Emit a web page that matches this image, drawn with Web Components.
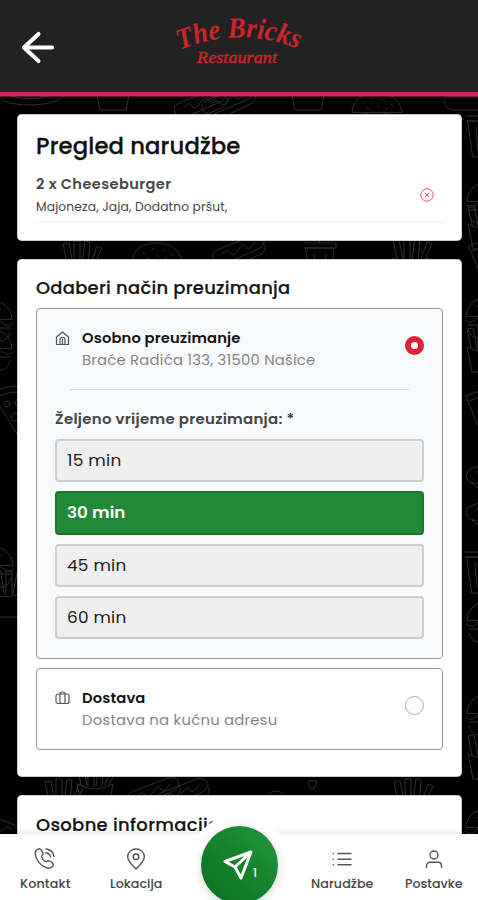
<!DOCTYPE html>
<html lang="hr">
<head>
<meta charset="utf-8">
<meta name="viewport" content="width=device-width, initial-scale=1">
<title>The Bricks Restaurant</title>
<style>
html,body{margin:0;height:100%;overflow:hidden;background:#000}
body{font-family:Poppins,Inter,"Noto Sans",sans-serif;font-feature-settings:"cv11" 1;color:#111}
</style>
</head>
<body>
<order-page></order-page>
<script>
const define = (name, html, after) => {
  const t = document.createElement('template');
  t.innerHTML = html;
  customElements.define(name, class extends HTMLElement {
    constructor() { super(); this.attachShadow({mode: 'open'}).append(t.content.cloneNode(true)); }
    connectedCallback() { if (after) after(this, this.shadowRoot); }
  });
};

/* Single line of text, tracked and slightly widened so that it spans the width in its "w" attribute. */
define('fit-text', `<style>:host{display:block;white-space:nowrap}span{display:inline-block;transform-origin:0 50%}</style><span><slot></slot></span>`, (el, root) => {
  const s = root.querySelector('span'), w = +el.getAttribute('w');
  el.style.width = w + 'px';
  s.style.letterSpacing = '0px';
  const natural = s.getBoundingClientRect().width;
  if (!natural) return;
  s.style.letterSpacing = (w - natural) * .55 / el.textContent.length + 'px';
  s.style.transform = 'scaleX(' + (w + .5) / s.getBoundingClientRect().width + ')';
});

define('food-pattern', `<style>:host{position:absolute;inset:0;z-index:0}svg{display:block}</style>
<svg width="478" height="900" fill="none" stroke="#303030" stroke-width="1" stroke-linecap="round">
<defs>
 <g id="burger"><path d="M2 20C3 6 14 1 27 1S50 7 52 20ZM1 24q5 5 10 0t10 0 10 0 10 0 11 0M4 29h46M4 33q2 9 10 9h26q9 0 10-9"/><path d="M13 10l2 2M22 6l2 2M33 7l2 2M41 12l2 2M27 13l2 2M17 16l2 1M35 16l2 1"/></g>
 <g id="fries"><path d="M3 22l5 25h26l5-25q-18 10-36 0M7 23L3 4l6-1 4 21M14 24V1h6v24M22 24l3-23 5 1-2 22M31 23l6-17 5 2-7 15"/></g>
 <g id="dog"><path d="M3 26Q0 18 9 15L43 2q9-2 11 5 0 6-8 9L14 30Q6 32 3 26M8 29q3 8 12 5l31-14q6-4 4-9M12 20q5-6 8-1t8-3 8-3 9-5"/></g>
 <g id="pizza"><path d="M3 6Q24-5 46 8L21 49ZM6 11Q24 2 43 13"/><circle cx="19" cy="18" r="4"/><circle cx="31" cy="19" r="3"/><circle cx="23" cy="32" r="4"/></g>
 <g id="cup"><path d="M4 8h28l-4 36H9ZM2 3h32v5H2M12 14l2 24M24 14l-2 24M17 3l4-12 8-3"/></g>
</defs>
<ellipse cx="30" cy="94" rx="34" ry="11"/><path d="M12 96q18 6 36 0"/>
<use href="#burger" x="350" y="92"/>
<use href="#fries" x="92" y="63"/><use href="#dog" x="172" y="87"/><use href="#dog" x="200" y="84"/><use href="#fries" x="287" y="63"/><use href="#burger" x="440" y="68"/>
<use href="#fries" x="60" y="240"/><use href="#burger" x="130" y="242"/><use href="#dog" x="210" y="234"/><use href="#cup" x="302" y="240"/><use href="#fries" x="390" y="236"/>
<use href="#cup" x="464" y="113"/><use href="#burger" x="465" y="181"/><use href="#fries" x="465" y="202"/><use href="#pizza" x="466" y="240"/><use href="#burger" x="464" y="296"/><use href="#fries" x="464" y="325"/><use href="#pizza" x="463" y="390"/><use href="#dog" x="464" y="453"/><use href="#dog" x="464" y="490"/><use href="#cup" x="463" y="549"/><use href="#burger" x="465" y="600"/><use href="#burger" x="465" y="693"/><use href="#fries" x="465" y="732"/><use href="#burger" x="464" y="807"/>
<g transform="translate(14 0) scale(-1 1)"><use href="#burger" x="0" y="299"/><use href="#burger" x="0" y="328"/><use href="#pizza" x="-24" y="385"/><use href="#burger" x="-1" y="545"/><use href="#fries" x="-12" y="570"/><use href="#dog" x="-10" y="810"/></g>
<use href="#fries" x="42" y="778"/><use href="#fries" x="74" y="762"/><use href="#dog" x="125" y="776"/><use href="#dog" x="154" y="777"/><path d="M308 781h9l-3 8h-3z"/><use href="#fries" x="391" y="778"/><circle cx="276" cy="801" r="10"/>
</svg>`);

define('bricks-logo', `<style>:host{display:block;width:140px;height:70px}text{font-family:"Monotype Corsiva","Liberation Serif",serif;font-style:italic;fill:#cb2529}</style>
<svg width="140" height="70" viewBox="170 5 140 70">
<path id="arc" d="M180 50Q239 25.500 297 48.500" fill="none"/>
<text font-size="29" font-weight="700" textLength="121" lengthAdjust="spacingAndGlyphs"><textPath href="#arc" textLength="121" lengthAdjust="spacingAndGlyphs">The Bricks</textPath></text>
<text x="197" y="62.500" font-size="17.500" textLength="80" lengthAdjust="spacingAndGlyphs" stroke="#cb2529" stroke-width=".5">Restaurant</text>
</svg>`);

define('app-header', `<style>:host{display:grid;grid-template-columns:170px 140px 1fr;height:92px;padding-top:5px;box-sizing:border-box;background:#222;box-shadow:0 4.5px 0 #cc2760;position:relative;z-index:1;margin-bottom:22px}
.back{padding:25px 0 0 20px}</style>
<div class="back"><svg width="36" height="36" fill="none" stroke="#fff" stroke-width="4.100" stroke-linecap="round" stroke-linejoin="round"><path d="M32 17.500H4M18.500 4L4 17.500 18.500 31"/></svg></div><bricks-logo></bricks-logo>`);

define('page-card', `<style>:host{display:block;box-sizing:border-box;height:var(--h);padding:var(--pt,15px) 19px 0;background:#fff;border-radius:5px;box-shadow:inset 0 0 0 .5px #999}</style><slot></slot>`);

define('order-item', `<style>:host{display:grid;grid-template-columns:1fr 17px;border-bottom:2px solid #f7f7f7;padding:0 6px 4px 0;margin-top:10px}
.n{font-weight:600;font-size:14px;line-height:22px;color:#484848}.d{font-size:12px;line-height:20px;margin-top:2px;color:#444}svg{margin-top:15px}</style>
<div><fit-text class="n" w="135">2 x Cheeseburger</fit-text><fit-text class="d" w="191">Majoneza, Jaja, Dodatno pršut,</fit-text></div>
<svg width="14" height="14" fill="none" stroke="#dc5a60" stroke-width="1"><circle cx="7" cy="7" r="6.200"/><path d="M4.700 4.700l4.600 4.600M9.300 4.700L4.700 9.300"/></svg>`);

define('option-box', `<style>:host{display:block;box-sizing:border-box;height:var(--h);padding:18px 18px 0;border:1px solid #999;border-radius:4px;background:var(--bg,#fff)}</style><slot></slot>`);

define('option-row', `<style>:host{display:grid;grid-template-columns:27px 1fr 19px}
.i{padding-top:4px;height:16px}.r{box-sizing:border-box;width:19px;height:19px;border-radius:50%;border:1px solid #aaa;background:#fff;margin-top:9px}:host([on]) .r{border:6px solid #dc2339}
::slotted([slot=t]){font-weight:600;font-size:14.500px;line-height:22px;color:#111}::slotted([slot=s]){font-size:14.500px;line-height:22px;color:#858585}</style>
<div class="i"><slot name="i"></slot></div><div><slot name="t"></slot><slot name="s"></slot></div><div class="r"></div>`);

define('time-choice', `<style>:host{display:flex;align-items:center;box-sizing:border-box;height:43px;padding:0 0 0 10px;border:2px solid #cdcdcd;border-radius:4px;background:#efefef;font-size:16.500px;color:#222}
:host([on]){background:#218838;border-color:#1b7728;color:#fff;font-weight:600;height:44px;padding-bottom:1px;margin-bottom:-1px}</style><slot></slot>`);

define('nav-item', `<style>:host{display:flex;flex-direction:column;align-items:center;font-size:12.500px;line-height:18px;color:#454545;font-weight:500}::slotted(svg){display:block;margin-bottom:5px}</style><slot></slot>`);

define('bottom-nav', `<style>:host{position:absolute;left:0;right:0;bottom:0;height:66px;z-index:2;background:#fff;box-shadow:0 0 7px rgba(0,0,0,.16)}
.row{position:relative;z-index:1;display:grid;grid-template-columns:90px 92px 114px 92px 90px;padding-top:14px}
.halo{position:absolute;left:189px;top:-20px;width:101px;height:101px;border-radius:50%;background:#fff}
.go{position:absolute;z-index:2;left:201px;top:-8px;width:77px;height:78px;border-radius:50%;background:linear-gradient(45deg,#086f1b,#24963c);box-shadow:0 3px 10px rgba(0,0,0,.17)}
svg{fill:none;stroke:#555;stroke-width:1.400;stroke-linecap:round;stroke-linejoin:round}
.go svg{stroke:#fff;stroke-width:3;margin:23px 0 0 21px;display:block}
.go b{position:absolute;left:52px;top:39px;font-size:11.500px;line-height:16px;color:#fff;font-weight:500}</style>
<div class="halo"></div><div class="row">
<nav-item><svg width="24" height="22"><path d="M5 1.200c1-.7 2.500-.4 3.200.7l1.600 2.700c.6 1 .3 2-.5 2.700-1.100 1-.6 2.400.6 4.100 1.300 1.700 2.600 2.800 4 1.900 1-.7 2-.7 3 0l2.500 1.800c1 .7 1.100 2 .4 3-1.200 1.700-3 2.500-5.300 1.900C7.700 18.400 2.500 11.500 2.200 5.600 2.100 3.600 3.400 2.100 5 1.200ZM13 1c4.500.4 7.300 3.200 8 7.500M13 4.700c2.500.4 4 1.900 4.500 4.200"/></svg><fit-text w="50">Kontakt</fit-text></nav-item>
<nav-item><svg width="20" height="22"><path d="M10 21C7 18 1.700 13.500 1.700 8.800 1.700 4.300 5.500 1 10 1s8.300 3.300 8.300 7.800C18.300 13.500 13 18 10 21Z"/><circle cx="10" cy="8.800" r="2.800"/></svg><fit-text w="52">Lokacija</fit-text></nav-item><i></i>
<nav-item><svg width="20" height="22"><path d="M6 5.500h13M6 11.200h13M6 16.800h13M1.200 5.500h.2M1.200 11.200h.2M1.200 16.800h.2"/></svg><fit-text w="62">Narudžbe</fit-text></nav-item>
<nav-item><svg width="20" height="22"><circle cx="11" cy="7" r="4"/><path d="M3.500 19.500v-1.700c0-2.200 1.600-3.600 3.600-3.600h7.800c2 0 3.600 1.400 3.600 3.600v1.700"/></svg><fit-text w="57">Postavke</fit-text></nav-item>
</div><div class="go"><svg width="34" height="34"><path d="M29 3L3 12.500 13 18 19 29ZM29 3L13 18"/></svg><b>1</b></div>`);

define('order-page', `<style>:host{display:block;position:relative;width:478px;height:900px;overflow:hidden;background:#000}
main{position:relative;z-index:1;display:flex;flex-direction:column;gap:18px;padding:0 16px 0 17px}
.h1{font-size:22.500px;line-height:34px;font-weight:500;color:#111;-webkit-text-stroke:.3px #111}.h2{font-size:17.500px;line-height:28px;font-weight:500;color:#151515;-webkit-text-stroke:.2px #151515}
option-box{margin-top:6px}option-box+option-box{margin-top:9px}
hr{border:0;height:1px;background:#ddd;margin:18px 15px}
.label{font-size:14.500px;line-height:22px;font-weight:600;color:#444}
.times{display:grid;gap:9.300px;margin-top:9px}
svg{fill:none;stroke:#555;stroke-width:1.200;stroke-linejoin:round;stroke-linecap:round;display:block}</style>
<food-pattern></food-pattern><app-header></app-header>
<main>
<page-card style="--h:127px"><fit-text class="h1" w="204">Pregled narudžbe</fit-text><order-item></order-item></page-card>
<page-card style="--h:518px"><fit-text class="h2" w="254">Odaberi način preuzimanja</fit-text>
<option-box style="--h:351px;--bg:#f8f9fb"><option-row on><svg slot="i" width="15" height="15"><path d="M1.500 6L7.500 1l6 5v7.500h-12ZM5 13V8.500C5 5.500 10 5.500 10 8.500V13M7.500 8v5"/></svg><fit-text slot="t" w="158">Osobno preuzimanje</fit-text><fit-text slot="s" w="233">Braće Radića 133, 31500 Našice</fit-text></option-row><hr>
<fit-text class="label" w="239">Željeno vrijeme preuzimanja: *</fit-text>
<div class="times"><time-choice><fit-text w="54">15 min</fit-text></time-choice><time-choice on><fit-text w="58">30 min</fit-text></time-choice><time-choice><fit-text w="59">45 min</fit-text></time-choice><time-choice><fit-text w="59">60 min</fit-text></time-choice></div></option-box>
<option-box style="--h:82px"><option-row><svg slot="i" width="16" height="15"><rect x="1" y="3" width="13" height="9.500" rx="2"/><path d="M5 12.500V3Q5 1 7.500 1T10 3v9.500"/></svg><fit-text slot="t" w="63">Dostava</fit-text><fit-text slot="s" w="195">Dostava na kućnu adresu</fit-text></option-row></option-box></page-card>
<page-card style="--h:160px;--pt:15.500px"><fit-text class="h2" w="183">Osobne informacije</fit-text></page-card>
</main><bottom-nav></bottom-nav>`);
</script>
</body>
</html>
